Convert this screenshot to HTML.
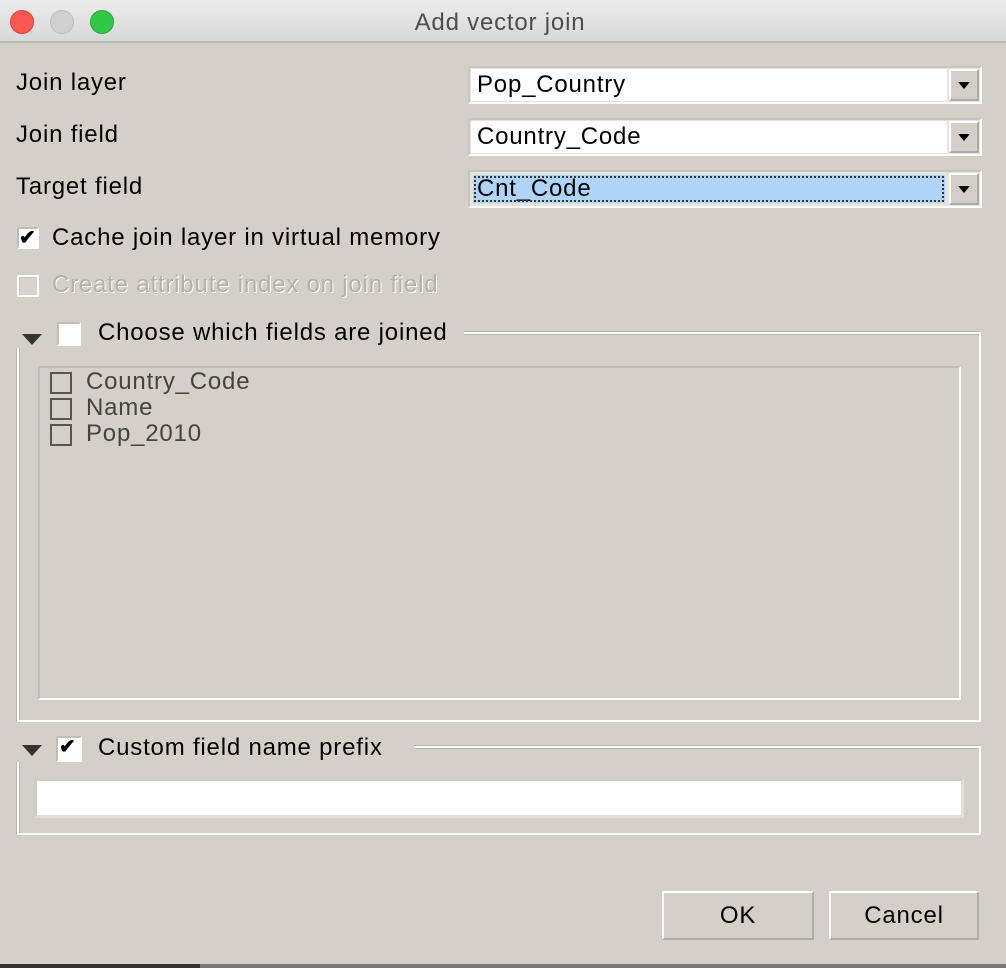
<!DOCTYPE html>
<html><head><style>
*{box-sizing:border-box;margin:0;padding:0}
body{width:1006px;height:968px;background:#d4d0c8;font-family:"Liberation Sans",Arial,sans-serif;color:#000;position:relative;overflow:hidden;font-size:24px;letter-spacing:0.8px}
.abs{position:absolute}
.title{left:0;top:0;width:1006px;height:43px;background:linear-gradient(#ececec,#d8d8d8);border-bottom:2px solid #b8b8b8}
.dot{width:24px;height:24px;border-radius:50%;top:10px}
.lbl{line-height:26px;white-space:nowrap}
.combo{left:468px;width:514px;height:38px;background:#e6e3dd;border:2px solid #c8c5c0;border-bottom-color:#fff;border-right-color:#fff}
.combo .f{position:absolute;left:1px;top:1px;width:476px;height:32px;background:#fff;padding-left:6px;line-height:32px}
.combo .b{position:absolute;left:479px;top:1px;width:30px;height:32px;background:#d4d0c8;border:2px solid #fff;border-right-color:#aaa;border-bottom-color:#aaa}
.combo .b:after{content:"";position:absolute;left:7px;top:11px;border-left:6px solid transparent;border-right:6px solid transparent;border-top:7px solid #000}
.cb{width:22px;height:22px;background:#fff;border:2px solid #c0bdb7;border-right-color:#fff;border-bottom-color:#fff}
.frame{border:2px solid #fff;box-shadow:inset 1px 1px 0 #b8b5af, -1px -1px 0 #b8b5af}
.tri{border-left:10px solid transparent;border-right:10px solid transparent;border-top:11px solid #333}
.btn{height:49px;background:#d4d0c8;border:2px solid #fff;border-right-color:#b0ada7;border-bottom-color:#b0ada7;text-align:center;line-height:45px}
</style></head><body>
<div class="abs title"></div>
<div class="abs dot" style="left:10px;background:#fc5753;border:1px solid #df3e3a"></div>
<div class="abs dot" style="left:50px;background:#d0d0d0;border:1px solid #bdbdbd"></div>
<div class="abs dot" style="left:90px;background:#33c748;border:1px solid #27a93a"></div>
<div class="abs lbl" style="left:0;width:1000px;text-align:center;top:10px;color:#4d4d4d">Add vector join</div>

<div class="abs lbl" style="left:16px;top:70px">Join layer</div>
<div class="abs lbl" style="left:16px;top:122px">Join field</div>
<div class="abs lbl" style="left:16px;top:174px">Target field</div>

<div class="abs combo" style="top:66px"><div class="f">Pop_Country</div><div class="b"></div></div>
<div class="abs combo" style="top:118px"><div class="f">Country_Code</div><div class="b"></div></div>
<div class="abs combo" style="top:170px"><div class="f" style="background:#b0d3f8;outline:2px dotted #333;outline-offset:-3px;left:3px;top:3px;width:472px;height:28px;line-height:28px;padding-left:4px">Cnt_Code</div><div class="b"></div></div>

<div class="abs cb" style="left:17px;top:227px"></div>
<div class="abs" style="left:19px;top:225px;font-size:20px;font-weight:bold">✔</div>
<div class="abs lbl" style="left:52px;top:225px">Cache join layer in virtual memory</div>
<div class="abs cb" style="left:17px;top:275px;background:#d8d4cd;border-color:#fff;box-shadow:inset 1px 1px 0 #c8c5c0"></div>
<div class="abs lbl" style="left:52px;top:272px;color:#b4b0aa;text-shadow:1px 1px 0 #fff">Create attribute index on join field</div>

<div class="abs frame" style="left:17px;top:332px;width:964px;height:390px"></div>
<div class="abs" style="left:16px;top:318px;width:448px;height:30px;background:#d4d0c8"></div>
<div class="abs tri" style="left:22px;top:334px"></div>
<div class="abs cb" style="left:57px;top:322px;width:24px;height:24px"></div>
<div class="abs lbl" style="left:98px;top:320px">Choose which fields are joined</div>
<div class="abs" style="left:38px;top:366px;width:923px;height:334px;border:2px solid #fff;border-top-color:#c0bdb7;border-left-color:#c0bdb7"></div>
<div class="abs cb" style="left:50px;top:372px;background:none;border:2px solid #555"></div>
<div class="abs cb" style="left:50px;top:398px;background:none;border:2px solid #555"></div>
<div class="abs cb" style="left:50px;top:424px;background:none;border:2px solid #555"></div>
<div class="abs lbl" style="left:86px;top:369px;color:#444">Country_Code</div>
<div class="abs lbl" style="left:86px;top:395px;color:#444">Name</div>
<div class="abs lbl" style="left:86px;top:421px;color:#444">Pop_2010</div>

<div class="abs frame" style="left:17px;top:746px;width:964px;height:89px"></div>
<div class="abs" style="left:16px;top:732px;width:398px;height:30px;background:#d4d0c8"></div>
<div class="abs tri" style="left:22px;top:745px"></div>
<div class="abs cb" style="left:56px;top:736px;width:26px;height:26px"></div>
<div class="abs" style="left:59px;top:734px;font-size:20px;font-weight:bold">✔</div>
<div class="abs lbl" style="left:98px;top:735px">Custom field name prefix</div>
<div class="abs" style="left:34px;top:778px;width:930px;height:40px;background:#fff;border:3px solid #cfccc6;border-right-color:#e2dfda;border-bottom-color:#e2dfda"></div>

<div class="abs btn" style="left:662px;top:891px;width:152px">OK</div>
<div class="abs btn" style="left:829px;top:891px;width:150px">Cancel</div>
<div class="abs" style="left:0;top:964px;width:200px;height:4px;background:#333"></div>
<div class="abs" style="left:200px;top:964px;width:806px;height:4px;background:#777"></div>
</body></html>
